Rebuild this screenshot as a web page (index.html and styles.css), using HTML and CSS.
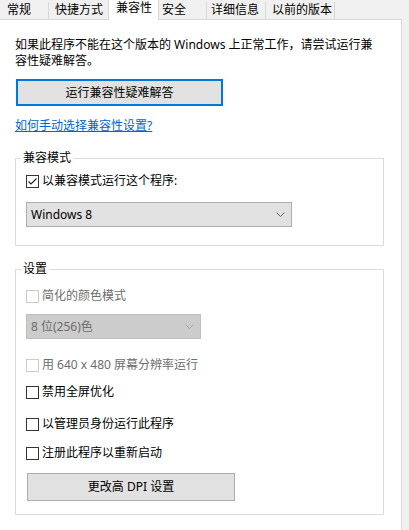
FILE: index.html
```html
<!DOCTYPE html>
<html lang="zh-CN">
<head>
<meta charset="utf-8">
<title>兼容性</title>
<link rel="stylesheet" href="styles.css">
</head>
<body>
<div class="window">
  <div class="tabs">
    <div class="tab tab-general">常规</div>
    <div class="tab tab-shortcut">快捷方式</div>
    <div class="tab tab-compat active">兼容性</div>
    <div class="tab tab-security">安全</div>
    <div class="tab tab-details">详细信息</div>
    <div class="tab tab-prev">以前的版本</div>
  </div>
  <div class="panel">
    <p class="desc">如果此程序不能在这个版本的 Windows 上正常工作，请尝试运行兼<br>容性疑难解答。</p>
    <button class="btn btn-focus">运行兼容性疑难解答</button>
    <a class="link" href="#">如何手动选择兼容性设置?</a>

    <fieldset class="group group-mode">
      <legend>兼容模式</legend>
      <label class="check">
        <span class="box"><svg width="11" height="11" viewBox="0 0 11 11"><path d="M1.5 5.5 L4 8 L9.5 2.5" fill="none" stroke="#222" stroke-width="1.1"/></svg></span>
        <span>以兼容模式运行这个程序:</span>
      </label>
      <div class="select select-os">
        <span>Windows 8</span>
        <svg class="chev" width="9" height="5" viewBox="0 0 9 5"><path d="M0.5 0.5 L4.5 4.5 L8.5 0.5" fill="none" stroke="#606060" stroke-width="1"/></svg>
      </div>
    </fieldset>

    <fieldset class="group group-settings">
      <legend>设置</legend>
      <label class="check disabled row-color">
        <span class="box"></span>
        <span>简化的颜色模式</span>
      </label>
      <div class="select select-color disabled">
        <span>8 位(256)色</span>
        <svg class="chev" width="9" height="5" viewBox="0 0 9 5"><path d="M0.5 0.5 L4.5 4.5 L8.5 0.5" fill="none" stroke="#a8a8a8" stroke-width="1"/></svg>
      </div>
      <label class="check disabled row-640">
        <span class="box"></span>
        <span>用 640 x 480 屏幕分辨率运行</span>
      </label>
      <label class="check row-fs">
        <span class="box"></span>
        <span>禁用全屏优化</span>
      </label>
      <label class="check row-admin">
        <span class="box"></span>
        <span>以管理员身份运行此程序</span>
      </label>
      <label class="check row-reg">
        <span class="box"></span>
        <span>注册此程序以重新启动</span>
      </label>
      <button class="btn btn-dpi">更改高 DPI 设置</button>
    </fieldset>
  </div>
</div>
</body>
</html>
```

FILE: styles.css
```css
* { box-sizing: border-box; }

html, body {
  margin: 0;
  padding: 0;
  background: #f0f0f0;
}

body {
  font-family: "Noto Sans", "Noto Sans CJK SC", sans-serif;
  font-size: 12px;
  color: #000;
  width: 409px;
  height: 530px;
  overflow: hidden;
}

.window {
  display: flex;
  flex-direction: column;
  height: 530px;
}

/* Tabs */
.tabs {
  display: flex;
  height: 19px;
  align-items: flex-end;
}

.tab {
  height: 17px;
  line-height: 15px;
  padding-left: 6px;
  white-space: nowrap;
  background: #f0f0f0;
  border-right: 1px solid #d9d9d9;
  margin-bottom: 0;
}

.tab-general { width: 49px; padding-left: 7px; }
.tab-shortcut { width: 60px; }
.tab-compat { width: 51px; }
.tab-security { width: 48px; padding-left: 3px; }
.tab-details { width: 59px; padding-left: 4px; }
.tab-prev { width: 69px; }

.tab.active {
  position: relative;
  z-index: 1;
  height: 20px;
  margin-bottom: -1px;
  margin-left: -1px;
  background: #fff;
  border-left: 1px solid #d9d9d9;
  border-right: 1px solid #d9d9d9;
  line-height: 15px;
  padding-left: 7px;
}

/* Panel */
.panel {
  flex: 1;
  width: 402px;
  background: #fff;
  border-top: 1px solid #d9d9d9;
  border-right: 1px solid #d9d9d9;
  padding: 17px 0 0 15px;
  display: flex;
  flex-direction: column;
  align-items: flex-start;
}

.desc {
  margin: 0;
  line-height: 16px;
  white-space: nowrap;
}

.btn {
  font: inherit;
  color: #000;
  background: #e1e1e1;
  border: 1px solid #adadad;
  padding: 0;
  margin: 0;
  text-align: center;
  line-height: 16px;
}

.btn-focus {
  margin-top: 10px;
  margin-left: 1px;
  width: 207px;
  height: 27px;
  border: 2px solid #0078d7;
}

.link {
  margin-top: 12px;
  line-height: 16px;
  color: #0066cc;
  text-decoration: underline;
}

/* Group boxes */
.group {
  margin: 0;
  width: 369px;
  border: 1px solid #dcdcdc;
  padding: 7px 10px 18px 10px;
  min-width: 0;
  display: flex;
  flex-direction: column;
  align-items: flex-start;
}

.group legend {
  line-height: 16px;
  padding: 0 2px;
  margin-left: -5px;
}

.group-mode { margin-top: 16px; }

.group-settings {
  margin-top: 15px;
  padding-top: 11px;
  padding-bottom: 13px;
}

/* Checkboxes */
.check {
  display: flex;
  align-items: center;
  gap: 3px;
  line-height: 16px;
  height: 16px;
}

.box {
  width: 13px;
  height: 13px;
  border: 1px solid #333;
  background: #fff;
  display: flex;
  align-items: center;
  justify-content: center;
}

.check.disabled { color: #6d6d6d; }
.check.disabled .box { border-color: #cccccc; }

.row-640 { margin-top: 18px; }
.row-fs { margin-top: 11px; }
.row-admin { margin-top: 16px; }
.row-reg { margin-top: 13px; }

/* Selects */
.select {
  display: flex;
  align-items: center;
  justify-content: space-between;
  height: 25px;
  border: 1px solid #adadad;
  background: #e1e1e1;
  padding: 0 6px 0 4px;
  line-height: 16px;
}

.select-os {
  margin-top: 13px;
  width: 266px;
}

.select-color {
  margin-top: 10px;
  width: 175px;
  background: #cccccc;
  border-color: #bfbfbf;
  color: #6d6d6d;
}

.chev { display: block; }

.btn-dpi {
  margin-top: 12px;
  margin-left: 1px;
  width: 208px;
  height: 28px;
}
```
